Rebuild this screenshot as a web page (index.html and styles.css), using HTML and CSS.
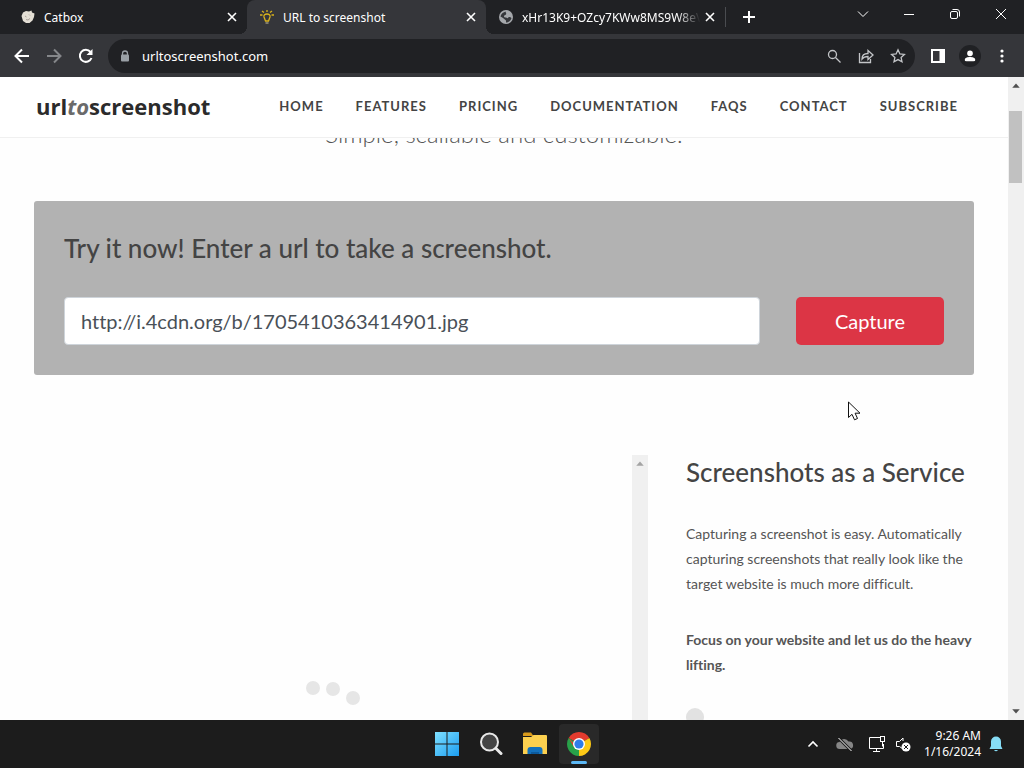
FILE: index.html
```html
<!DOCTYPE html>
<html lang="en">
<head>
    <meta charset="UTF-8">
    <meta name="viewport" content="width=device-width, initial-scale=1.0">
    <title>URL to screenshot</title>
    <link rel="stylesheet" href="styles.css">
</head>
<body>
    <!-- Browser tabs -->
    <div class="tab-strip">
        <div class="tab">
            <svg class="tab-icon" viewBox="0 0 14 14"><path d="M.5 6l1.500-3.500 3-1.500 3 .5 2.500-1 .5 2 2.500 1-.5 3.500-1.500 3.500-3 2.500H5L2 11z" fill="#e4dfd5"/><path d="M4 6l1.500 1M8 4.500l1 1M5 9.500l2 .5 2-1.500" stroke="#9a928a" stroke-width=".8" fill="none"/></svg>
            <span class="tab-title">Catbox</span>
            <button class="tab-close" aria-label="Close tab"><svg viewBox="0 0 16 16"><path d="M4 4l8 8M12 4l-8 8"/></svg></button>
        </div>
        <div class="tab active">
            <svg class="tab-icon" viewBox="0 0 14 14" fill="none" stroke="#d9b31c" stroke-width="1.3"><path d="M5.500 11L4 7c-.5-2 1-3 3-3s3.500 1 3 3l-1.500 4zM7 0v2M2 1l2 1.500M12 1l-2 1.500M0 5h2.500M11.500 5H14"/><path d="M5.500 13h3" stroke="#a8a38c"/></svg>
            <span class="tab-title">URL to screenshot</span>
            <button class="tab-close" aria-label="Close tab"><svg viewBox="0 0 16 16"><path d="M4 4l8 8M12 4l-8 8"/></svg></button>
        </div>
        <div class="tab">
            <svg class="tab-icon" viewBox="0 0 14 14"><circle cx="7" cy="7" r="7" fill="#a5a8ac"/><path d="M7 1.500c-1 1 1 2 0 3s-2 .5-2 2 2 .5 3 1.500 1-1 2-1 2 .5 2.500 1c-.5 2.500-3 4.500-5.500 4.500v-2L4 8 1.500 6.500C2 4 4 2 7 1.500z" fill="#35373b"/></svg>
            <span class="tab-title fade">xHr13K9+OZcy7KWw8MS9W8eV</span>
            <button class="tab-close" aria-label="Close tab"><svg viewBox="0 0 16 16"><path d="M4 4l8 8M12 4l-8 8"/></svg></button>
        </div>
        <button class="new-tab" aria-label="New tab"><svg viewBox="0 0 16 16"><path d="M8 2v12M2 8h12"/></svg></button>
        <div class="window-controls">
            <button aria-label="Search tabs"><svg viewBox="0 0 12 12"><path d="M1 3.500l5 5 5-5"/></svg></button>
            <button aria-label="Minimize"><svg viewBox="0 0 12 12"><path d="M1 6.500h10"/></svg></button>
            <button aria-label="Restore"><svg viewBox="0 0 12 12"><rect x="1.500" y="3.500" width="7" height="7" rx="1.500"/><path d="M3.500 1.500H8a2.500 2.500 0 0 1 2.500 2.500v4.500"/></svg></button>
            <button aria-label="Close window"><svg viewBox="0 0 12 12"><path d="M1 1l10 10M11 1L1 11"/></svg></button>
        </div>
    </div>

    <!-- Address bar -->
    <div class="toolbar">
        <button class="tool" aria-label="Back"><svg viewBox="0 0 16 16"><path d="M15 8H2M8 1.500L1.500 8 8 14.500"/></svg></button>
        <button class="tool dim" aria-label="Forward"><svg viewBox="0 0 16 16"><path d="M1 8h13M8 1.500L14.500 8 8 14.500"/></svg></button>
        <button class="tool" aria-label="Reload"><svg viewBox="0 0 16 16"><path d="M13.500 10A6 6 0 1 1 12.500 4"/><path d="M14.500 1v6h-6z" fill="#fff" stroke="none"/></svg></button>
        <div class="omnibox">
            <svg class="lock" viewBox="0 0 10 12"><path d="M2.500 5V3.500a2.500 2.500 0 0 1 5 0V5" fill="none" stroke="#9aa0a6" stroke-width="1.300"/><rect x="1" y="4.500" width="8" height="7" rx="1" fill="#9aa0a6"/></svg>
            <input class="address" type="text" aria-label="Address" value="urltoscreenshot.com">
            <button class="tool small" aria-label="Zoom"><svg viewBox="0 0 16 16"><circle cx="6.500" cy="6.500" r="4"/><path d="M9.500 9.500l5 5"/></svg></button>
            <button class="tool small" aria-label="Share"><svg viewBox="0 0 16 16"><path d="M1.500 5v9.500h11V11"/><path d="M4 11c0-4 2.500-5.500 6-5.500V2.500l5 4.500-5 4.500v-3c-3 0-4.500.5-6 2.500z"/></svg></button>
            <button class="tool small" aria-label="Bookmark"><svg viewBox="0 0 16 16"><path d="M8 1.800l1.900 4.100 4.500.5-3.300 3 .9 4.400L8 11.600l-4 2.200.9-4.400-3.300-3 4.500-.5z"/></svg></button>
        </div>
        <button class="tool" aria-label="Side panel"><svg viewBox="0 0 16 16"><path d="M2 2h12v12H2z"/><path d="M9.500 2H15v12H9.500z" fill="#fff" stroke="none"/></svg></button>
        <button class="tool profile" aria-label="Profile"><svg viewBox="0 0 16 16"><circle cx="8" cy="5" r="3.200"/><path d="M2 14v-1.500C2 10 5 9.200 8 9.200s6 .8 6 3.300V14z"/></svg></button>
        <button class="tool menu" aria-label="Menu"><svg viewBox="0 0 16 16"><circle cx="8" cy="3" r="1.600"/><circle cx="8" cy="8" r="1.600"/><circle cx="8" cy="13" r="1.600"/></svg></button>
    </div>

    <!-- Page -->
    <div class="page">
        <div class="site">
            <header class="site-header">
                <a class="logo" href="#">url<em>to</em>screenshot</a>
                <nav class="site-nav">
                    <a href="#">HOME</a>
                    <a href="#">FEATURES</a>
                    <a href="#">PRICING</a>
                    <a href="#">DOCUMENTATION</a>
                    <a href="#">FAQS</a>
                    <a href="#">CONTACT</a>
                    <a href="#">SUBSCRIBE</a>
                </nav>
            </header>

            <main>
                <p class="tagline">Simple, scallable and customizable.</p>

                <form class="capture-form">
                    <label class="heading" for="url">Try it now! Enter a url to take a screenshot.</label>
                    <div class="capture-row">
                        <input type="text" id="url" class="url-input" value="http://i.4cdn.org/b/1705410363414901.jpg">
                        <button type="button" class="btn">Capture</button>
                    </div>
                </form>

                <div class="columns">
                    <div class="preview">
                        <div class="preview-body">
                            <svg class="loader" viewBox="0 0 60 30" fill="#e6e6e6"><circle cx="10" cy="8" r="7"/><circle cx="30" cy="9" r="7"/><circle cx="50" cy="18" r="7"/></svg>
                        </div>
                        <div class="scrollbar disabled">
                            <svg viewBox="0 0 17 17"><path d="M4.500 11h8l-4-4.500z"/></svg>
                        </div>
                    </div>
                    <section class="about">
                        <h2 class="heading">Screenshots as a Service</h2>
                        <p>Capturing a screenshot is easy. Automatically capturing screenshots that really look like the target website is much more difficult.</p>
                        <p><strong>Focus on your website and let us do the heavy lifting.</strong></p>
                        <div class="dot"></div>
                    </section>
                </div>
            </main>
        </div>
        <div class="scrollbar">
            <svg viewBox="0 0 17 17"><path d="M4.500 11h8l-4-4.500z"/></svg>
            <div class="track"><div class="thumb"></div></div>
            <svg viewBox="0 0 17 17"><path d="M4.500 6h8l-4 4.500z"/></svg>
        </div>
    </div>

    <!-- Taskbar -->
    <footer class="taskbar">
        <div class="apps">
            <button class="app" aria-label="Start">
                <svg viewBox="0 0 24 24"><defs><linearGradient id="win" x1="0" y1="0" x2="1" y2="1"><stop offset="0" stop-color="#7fe0ff"/><stop offset="1" stop-color="#1b9df0"/></linearGradient></defs><path d="M0 0h11.500v11.500H0zM12.500 0H24v11.500H12.500zM0 12.500h11.500V24H0zM12.500 12.500H24V24H12.500z" fill="url(#win)"/></svg>
            </button>
            <button class="app" aria-label="Search">
                <svg viewBox="0 0 24 24"><circle cx="10.500" cy="10" r="8.500" fill="#444" stroke="#e8e8e8" stroke-width="2"/><path d="M17 16.500l5 5" stroke="#e8e8e8" stroke-width="3" stroke-linecap="round"/></svg>
            </button>
            <button class="app" aria-label="File Explorer">
                <svg viewBox="0 0 24 24"><path d="M0 2q0-1.500 1.500-1.500H8L10.500 4H0z" fill="#d99a1b"/><path d="M0 5h8l2.500-2H23q1 0 1 1v18H0z" fill="#fcd04f"/><path d="M4.500 22v-4q0-3 3-3h9q3 0 3 3v4z" fill="#1371bd"/><path d="M8 22v-2h8v2z" fill="#0c5a9c"/></svg>
            </button>
            <button class="app current" aria-label="Google Chrome">
                <svg viewBox="0 0 24 24"><path d="M12 12L1.610 6A12 12 0 0 1 22.390 6z" fill="#e33b2e"/><path d="M12 12L22.390 6A12 12 0 0 1 12 24z" fill="#fdc916"/><path d="M12 12V24A12 12 0 0 1 1.610 6z" fill="#28a149"/><path d="M12 6h10.390L12 6.500zM6.800 15L1.610 6l6 6z" fill="#e33b2e"/><path d="M17.200 15L12 24l1-7z" fill="#fdc916"/><circle cx="12" cy="12" r="6" fill="#fff"/><circle cx="12" cy="12" r="4.600" fill="#2f7de9"/></svg>
            </button>
        </div>
        <div class="tray">
            <button class="tray-icon" aria-label="Show hidden icons"><svg viewBox="0 0 18 18"><path d="M4.500 11.500L9 7l4.500 4.500" stroke-width="1.600"/></svg></button>
            <button class="tray-icon" aria-label="OneDrive"><svg viewBox="0 0 18 18"><path d="M4 14a3.500 3.500 0 0 1-.5-7A5 5 0 0 1 12.500 6.500 3.800 3.800 0 0 1 14 14z" fill="#858585" stroke="none"/><path d="M2.500 3l13 13" stroke="#1c1c1c" stroke-width="3"/><path d="M2.500 3l13 13"/></svg></button>
            <button class="tray-icon" aria-label="Network"><svg viewBox="0 0 18 18"><path d="M12 2.500H1.500v11h14V9M8.500 13.500v3M5 16.500h7"/><rect x="12.500" y="1.500" width="4" height="5"/><path d="M14.500 6.500v5"/></svg></button>
            <button class="tray-icon narrow" aria-label="Volume"><svg viewBox="0 0 18 18"><path d="M9 6V3L5.500 6.500h-3v5h3L9 14"/><circle cx="12" cy="12" r="4.500" fill="#fff" stroke="none"/><path d="M10 10l4 4M14 10l-4 4" stroke="#1c1c1c"/></svg></button>
            <div class="clock">
                <span>9:26 AM</span>
                <span>1/16/2024</span>
            </div>
            <button class="tray-icon bell" aria-label="Notifications"><svg viewBox="0 0 18 18"><path d="M9 1.500a5 5 0 0 1 5 5V11l1.500 3h-13L4 11V6.500a5 5 0 0 1 5-5zM7 15h4q-2 2.500-4 0z" fill="#86dcf5" stroke="none"/></svg></button>
        </div>
    </footer>

    <svg class="cursor" viewBox="0 0 13 20"><path d="M.5 1v15.500l3.500-3.200 2.500 5.500 3-1.300-2.400-5.300H12z" fill="#fff" stroke="#111"/></svg>
</body>
</html>
```
FILE: styles.css
```css
:root {
    --strip-color: #202124;
    --toolbar-color: #35363a;
    --taskbar-color: #1c1c1c;
    --panel-color: #b2b2b2;
    --accent-color: #dc3545;
    --heading-color: #444444;
    --text-color: #555555;
    --ui-font: 'Noto Sans', 'Open Sans', sans-serif;
    --body-font: Lato, sans-serif;
}

* {
    margin: 0;
    padding: 0;
    box-sizing: border-box;
    font-variant-ligatures: none;
}

body {
    display: flex;
    flex-direction: column;
    height: 100vh;
    overflow: hidden;
    font-family: var(--body-font);
    color: var(--text-color);
    background-color: #fefefe;
}

button {
    border: none;
    background: none;
    flex-shrink: 0;
    display: flex;
    align-items: center;
    justify-content: center;
}

a {
    text-decoration: none;
    color: inherit;
}

/* Tabs */
.tab-strip {
    display: flex;
    height: 34px;
    flex-shrink: 0;
    padding-left: 8px;
    background-color: var(--strip-color);
    color: #ffffff;
    font-family: var(--ui-font);
    font-size: 12px;
}

.tab {
    display: flex;
    align-items: center;
    width: 239px;
    padding: 0 7px 0 13px;
    position: relative;
}

.tab.active {
    background-color: var(--toolbar-color);
    border-radius: 8px 8px 0 0;
}

.tab.active::before,
.tab.active::after {
    content: "";
    position: absolute;
    bottom: 0;
    width: 8px;
    height: 8px;
}

.tab.active::before {
    left: -8px;
    background: radial-gradient(circle at 0 0, transparent 8px, var(--toolbar-color) 8px);
}

.tab.active::after {
    right: -8px;
    background: radial-gradient(circle at 100% 0, transparent 8px, var(--toolbar-color) 8px);
}

.tab-icon {
    width: 14px;
    height: 14px;
    margin-right: 9px;
    flex-shrink: 0;
}

.tab-title {
    flex: 1;
    overflow: hidden;
    white-space: nowrap;
}

.tab-title.fade {
    mask-image: linear-gradient(to right, #000 86%, transparent 99%);
}

.tab-close,
.tab-close svg {
    width: 16px;
    height: 16px;
}

.tab-strip button svg {
    fill: none;
    stroke: #ffffff;
}

.tab-strip .tab-close svg {
    stroke-width: 1.6;
}

.new-tab {
    width: 46px;
    border-left: 1px solid #4a4c50;
    height: 20px;
    align-self: center;
}

.new-tab svg {
    width: 16px;
    height: 16px;
    stroke-width: 2;
}

.window-controls {
    display: flex;
    margin-left: auto;
}

.window-controls button {
    width: 46px;
    height: 28px;
}

.window-controls svg {
    width: 12px;
    height: 12px;
}

/* Toolbar */
.toolbar {
    display: flex;
    align-items: center;
    height: 43px;
    flex-shrink: 0;
    padding: 0 6px;
    background-color: var(--toolbar-color);
}

.tool {
    width: 32px;
    height: 32px;
}

.tool svg {
    width: 16px;
    height: 16px;
    fill: none;
    stroke: #ffffff;
    stroke-width: 2;
}

.tool.dim svg {
    stroke: #85878a;
}

.tool.small svg {
    stroke: #c3c5c8;
    stroke-width: 1.3;
}

.tool.profile svg {
    width: 22px;
    height: 22px;
    padding: 4px;
    border-radius: 50%;
    background-color: var(--strip-color);
}

.tool.profile svg,
.tool.menu svg {
    fill: #ffffff;
    stroke: none;
}

.omnibox {
    display: flex;
    align-items: center;
    flex: 1;
    height: 34px;
    margin: 0 7px 0 6px;
    padding: 0 1px 0 12px;
    border-radius: 17px;
    background-color: var(--strip-color);
}

.lock {
    width: 10px;
    height: 12px;
    margin-right: 12px;
}

.address {
    flex: 1;
    min-width: 0;
    border: none;
    outline: none;
    background: none;
    color: #ffffff;
    font-family: var(--ui-font);
    font-size: 13px;
}

/* Page */
.page {
    display: flex;
    flex: 1;
    min-height: 0;
}

.site {
    flex: 1;
    overflow: hidden;
}

.site-header {
    display: flex;
    align-items: center;
    justify-content: space-between;
    height: 61px;
    padding: 0 50px 2px 36px;
    position: relative;
    z-index: 1;
    background-color: #ffffff;
    border-bottom: 1px solid #f0f0f0;
}

.logo {
    font-family: 'Open Sans', sans-serif;
    font-size: 22px;
    font-weight: 700;
    color: #2b2b2b;
}

.logo em {
    color: #6a6a6a;
}

.site-nav {
    display: flex;
    gap: 32px;
    font-size: 13px;
    font-weight: 700;
    letter-spacing: 1px;
    color: var(--heading-color);
}

main {
    max-width: 1100px;
    margin: -20px auto 0;
    padding: 0 34px;
    position: relative;
}

.tagline {
    text-align: center;
    font-size: 24px;
    font-weight: 300;
    line-height: 32px;
    margin-bottom: 51px;
}

.heading {
    display: block;
    font-size: 26px;
    font-weight: 500;
    line-height: 34px;
    margin-bottom: 32px;
    color: var(--heading-color);
}

.capture-form {
    padding: 30px;
    border-radius: 3px;
    background-color: var(--panel-color);
}

.capture-row {
    display: flex;
    gap: 36px;
}

.url-input {
    flex: 1;
    min-width: 0;
    height: 48px;
    padding: 0 16px;
    border: 1px solid #ced4da;
    border-radius: 4px;
    background-color: #ffffff;
    color: #495057;
    font-family: var(--body-font);
    font-size: 20px;
}

.btn {
    width: 148px;
    height: 48px;
    border-radius: 5px;
    background-color: var(--accent-color);
    color: #ffffff;
    font-family: var(--body-font);
    font-size: 20px;
    cursor: pointer;
}

.columns {
    display: grid;
    grid-template-columns: 1fr 288px;
    gap: 38px;
    margin-top: 80px;
}

.preview {
    display: flex;
    height: 400px;
}

.preview-body {
    flex: 1;
    padding-top: 225px;
    text-align: center;
}

.loader {
    width: 60px;
    height: 30px;
}

.about p {
    font-size: 14px;
    line-height: 25px;
    margin-bottom: 31px;
}

.dot {
    width: 18px;
    height: 18px;
    border-radius: 50%;
    background-color: #e2e2e2;
}

/* Scrollbars */
.scrollbar {
    display: flex;
    flex-direction: column;
    width: 16px;
    flex-shrink: 0;
    background-color: #f0f0f0;
}

.scrollbar svg {
    width: 16px;
    height: 17px;
    fill: #505050;
}

.scrollbar.disabled svg {
    fill: #a3a3a3;
}

.track {
    flex: 1;
    padding: 17px 2px 17px 1px;
}

.thumb {
    height: 72px;
    background-color: #c1c1c1;
}

/* Taskbar */
.taskbar {
    display: grid;
    grid-template-columns: 1fr auto 1fr;
    align-items: center;
    height: 48px;
    flex-shrink: 0;
    padding-left: 2px;
    background-color: var(--taskbar-color);
    color: #ffffff;
}

.apps {
    display: flex;
    gap: 4px;
    grid-column: 2;
}

.app {
    width: 40px;
    height: 40px;
    border-radius: 4px;
    position: relative;
}

.app svg {
    width: 24px;
    height: 24px;
}

.app.current {
    background-color: #292929;
}

.app.current::after {
    content: "";
    position: absolute;
    bottom: 0;
    width: 16px;
    height: 3px;
    border-radius: 2px;
    background-color: #5cb8f5;
}

.tray {
    display: flex;
    align-items: center;
    justify-content: flex-end;
    padding-right: 18px;
}

.tray-icon {
    width: 32px;
    height: 32px;
}

.tray-icon.narrow,
.tray-icon.bell {
    width: 20px;
}

.tray-icon svg {
    width: 18px;
    height: 18px;
    fill: none;
    stroke: #ffffff;
}

.clock {
    display: flex;
    flex-direction: column;
    width: 68px;
    margin-right: 5px;
    text-align: right;
    font-family: var(--ui-font);
    font-size: 12px;
    line-height: 16px;
}

.cursor {
    position: absolute;
    left: 848px;
    top: 401px;
    width: 13px;
    height: 20px;
}
```
